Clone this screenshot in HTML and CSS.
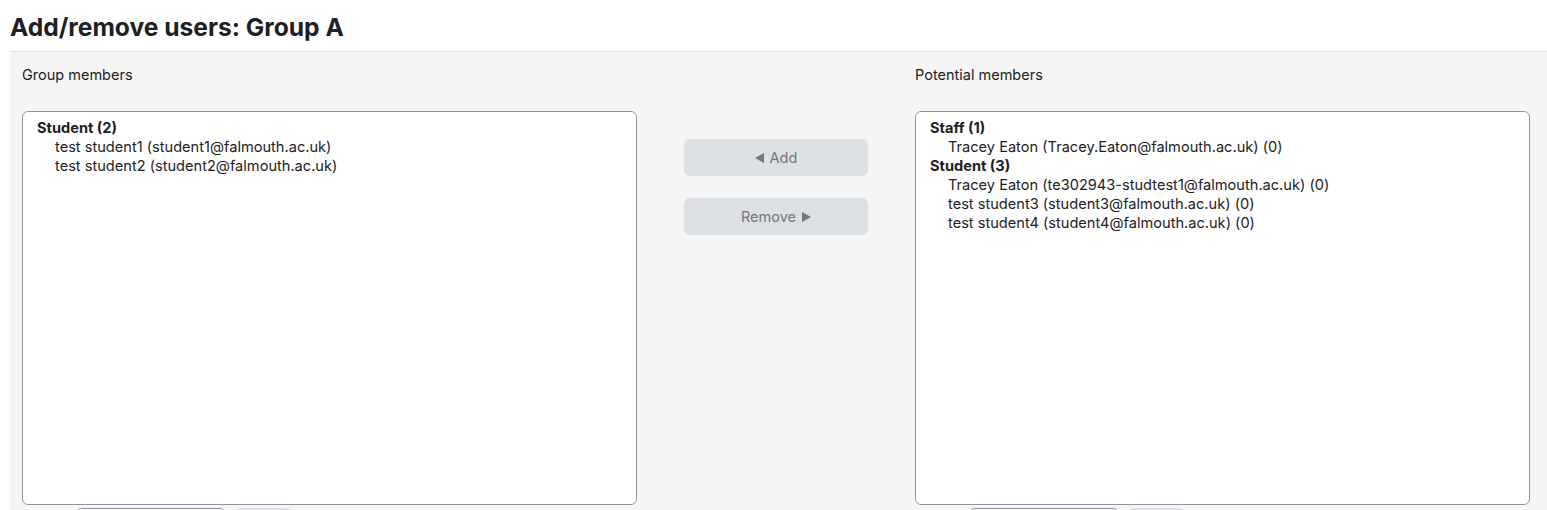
FILE: index.html
```html
<!DOCTYPE html>
<html>
<head>
<meta charset="utf-8">
<link rel="stylesheet" href="styles.css">
</head>
<body>
<h2 class="title">Add/remove users: Group A</h2>
<div class="panel">
  <div class="cols">
    <div class="col">
      <div class="label">Group members</div>
      <div class="select">
        <div class="grp">Student (2)</div>
        <div class="opt">test student1 (student1@falmouth.ac.uk)</div>
        <div class="opt">test student2 (student2@falmouth.ac.uk)</div>
      </div>
      <div class="search">
        <span class="slabel"></span>
        <span class="input"></span>
        <span class="clear"></span>
      </div>
    </div>
    <div class="mid">
      <button class="btn"><svg class="tri" width="9" height="10" viewBox="0 0 9 10"><path d="M0 5L9 0V10Z" fill="currentColor"/></svg>Add</button>
      <button class="btn">Remove<svg class="tri tri-r" width="9" height="10" viewBox="0 0 9 10"><path d="M9 5L0 0V10Z" fill="currentColor"/></svg></button>
    </div>
    <div class="col">
      <div class="label">Potential members</div>
      <div class="select">
        <div class="grp">Staff (1)</div>
        <div class="opt">Tracey Eaton (Tracey.Eaton@falmouth.ac.uk) (0)</div>
        <div class="grp">Student (3)</div>
        <div class="opt">Tracey Eaton (te302943-studtest1@falmouth.ac.uk) (0)</div>
        <div class="opt">test student3 (student3@falmouth.ac.uk) (0)</div>
        <div class="opt">test student4 (student4@falmouth.ac.uk) (0)</div>
      </div>
      <div class="search">
        <span class="slabel"></span>
        <span class="input"></span>
        <span class="clear"></span>
      </div>
    </div>
  </div>
</div>
</body>
</html>
```
FILE: styles.css
```css
html, body {
  margin: 0;
  padding: 0;
  background: #fff;
  overflow: hidden;
}
body {
  font-family: Inter, "Liberation Sans", sans-serif;
  color: #1d2125;
  padding-left: 10px;
  height: 510px;
}
.title {
  margin: 0;
  padding: 10px 0 7px;
  font-size: 24.6px;
  line-height: 34px;
  font-weight: 700;
  border-bottom: 1px solid #dee2e6;
}
.panel {
  background: #f5f5f5;
  padding: 13px 17px 0 12px;
  height: 445px;
  overflow: hidden;
}
.cols {
  display: flex;
}
.col {
  width: 615px;
  display: flex;
  flex-direction: column;
}
.label {
  font-size: 14.5px;
  line-height: 20px;
  height: 46px;
}
.select {
  height: 394px;
  box-sizing: border-box;
  background: #fff;
  border: 1px solid #8f959e;
  border-radius: 6px;
  padding: 7px 14px;
  font-size: 14.6px;
  line-height: 19px;
}
.grp {
  font-weight: 700;
}
.opt {
  padding-left: 18px;
}
.search {
  margin-top: 3px;
  display: flex;
  align-items: flex-start;
  gap: 9px;
}
.slabel {
  width: 45px;
  height: 36px;
}
.input {
  width: 148px;
  height: 34px;
  border: 1px solid #8f959e;
  border-radius: 6px;
  background: #fff;
}
.clear {
  width: 57px;
  height: 36px;
  border-radius: 6px;
  background: #dcdfe3;
}
.mid {
  flex: 1;
  display: flex;
  flex-direction: column;
  align-items: center;
  padding-top: 74px;
  gap: 22px;
}
.btn {
  width: 184px;
  height: 37px;
  border: none;
  border-radius: 6px;
  background: #dcdfe3;
  color: #74787c;
  font-family: Inter, "Liberation Sans", sans-serif;
  font-size: 14.5px;
  padding: 0;
  display: flex;
  align-items: center;
  justify-content: center;
}
.tri {
  margin-right: 6px;
}
.tri-r {
  margin-right: 0;
  margin-left: 6px;
}
```
